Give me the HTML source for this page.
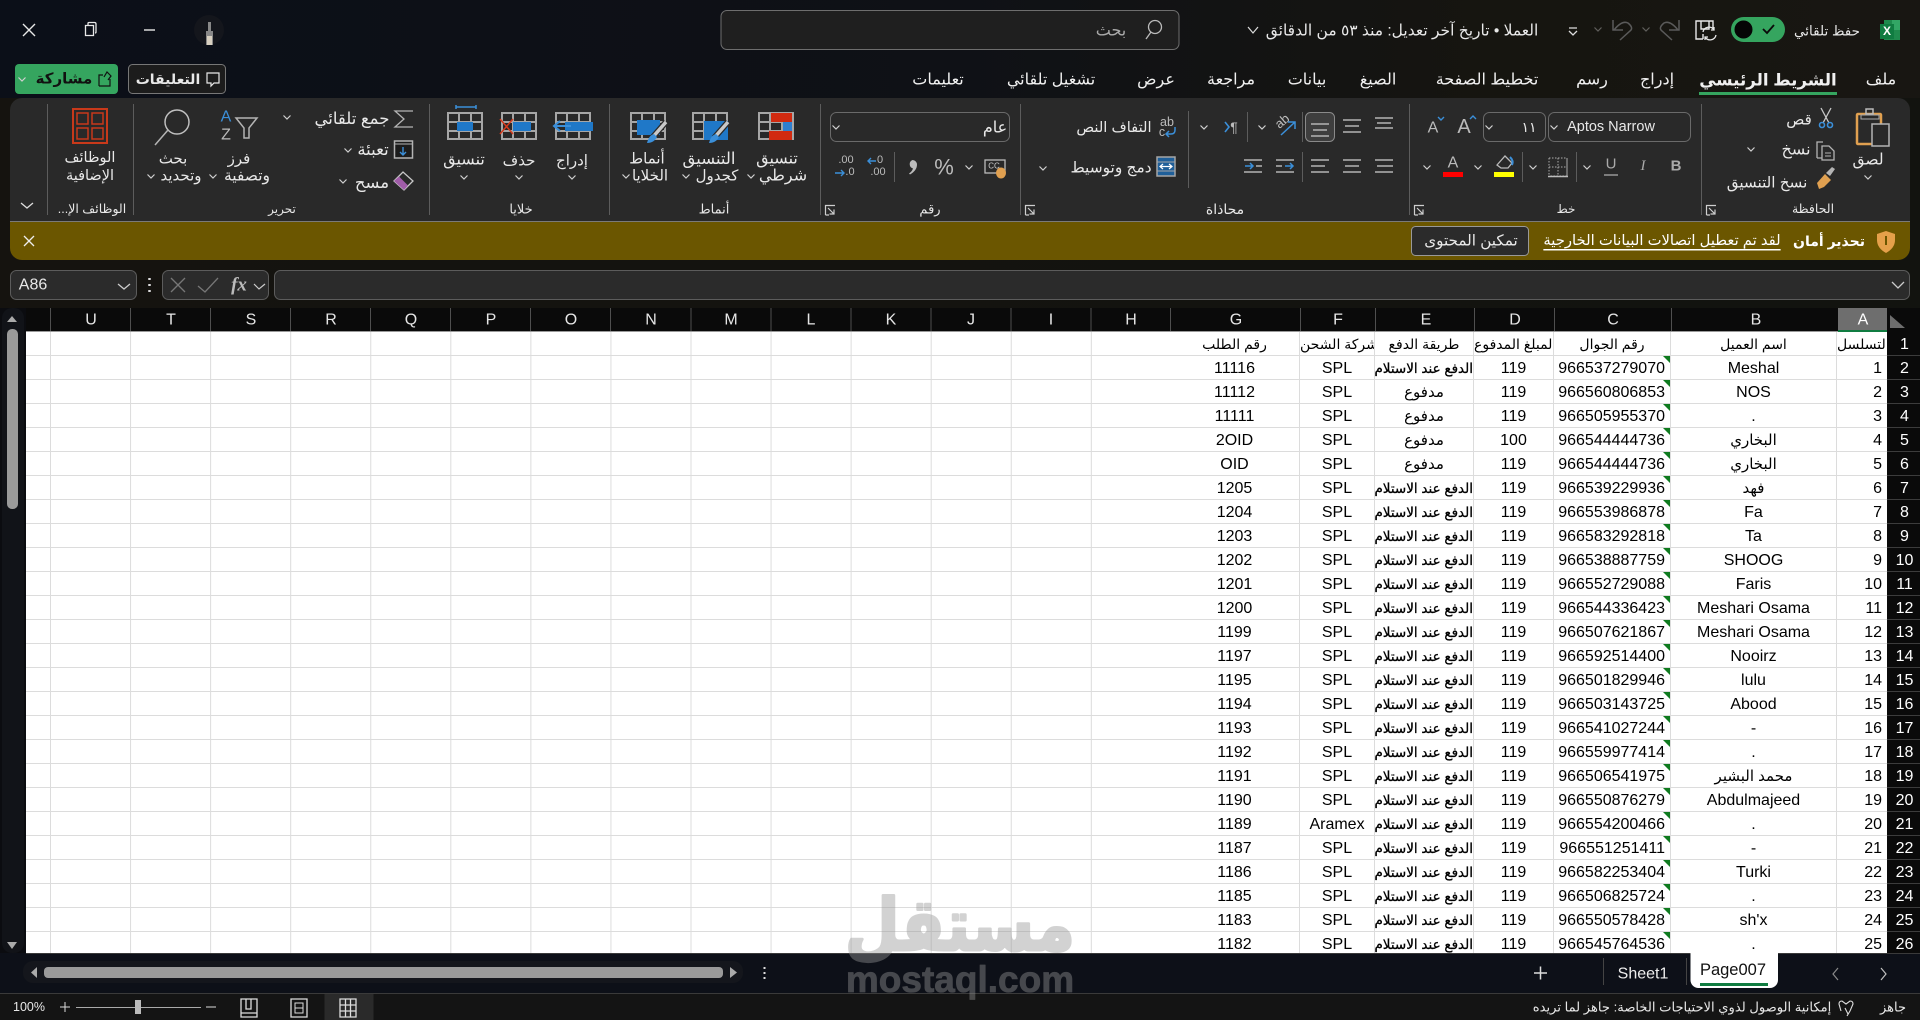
<!DOCTYPE html>
<html lang="ar"><head><meta charset="utf-8"><title>Excel</title>
<style>
html,body{margin:0;padding:0;width:1920px;height:1020px;overflow:hidden;background:#0d1017}
#sheet{position:absolute;left:26px;top:331px;width:1144px;height:622px;background-color:#fff;
background-image:linear-gradient(to right,#dcdcdc 1px,transparent 1px),linear-gradient(to bottom,#dcdcdc 1px,transparent 1px);
background-size:80.07px 100%,100% 24px;background-position:24px 0,0 24px}
#wrap{position:absolute;left:1170px;top:331px;width:750px;height:622px;overflow:hidden;background:#fff}
table{border-collapse:separate;border-spacing:0;table-layout:fixed;width:750px;font:16px "Liberation Sans","DejaVu Sans",sans-serif;color:#000}
td{padding:2px 0 0;height:24px;box-sizing:border-box;border-bottom:1px solid #dcdcdc;border-right:1px solid #dcdcdc;text-align:center;white-space:nowrap;overflow:hidden;position:relative;line-height:21px}
tr:first-child td{height:25px}
td.ar{font-size:15px}
td.e{direction:rtl;text-align:right;font-size:13.5px;-webkit-text-stroke:.3px #000;border-left:0}
td.c{text-align:right;padding-right:5px}
td.c:after{content:"";position:absolute;right:0;top:0;border-top:7px solid #0f7b1f;border-left:7px solid transparent}
td.a{text-align:right;padding-right:5px;border-right:0}
td.n{background:#0a0a0a;color:#fff;border:0;border-bottom:1px solid #3c3c3c;font-size:16px;padding-left:2px}
tr:first-child td.h{font-size:14px}
svg#ui{position:absolute;left:0;top:0}
#ui text{font-family:"Liberation Sans","DejaVu Sans",sans-serif;fill:#e8e8e8;font-size:13px;text-anchor:middle;dominant-baseline:central;direction:rtl}
#ui text.tab{font-size:16px;fill:#f0f0f0}
#ui text.b{font-weight:bold}
#ui text.h{font-size:16px;fill:#e6e6e6;direction:ltr}
#ui text.s{font-size:12px}
#ui .ln{fill:none;stroke:#b4b4b4;stroke-width:1.5}
#ui .bl{fill:none;stroke:#3b8fd9;stroke-width:2}
#wm{position:absolute;left:0;top:0;pointer-events:none}
#wm text{fill:#969696;stroke:#969696;stroke-linejoin:round;text-anchor:middle;font-weight:bold;font-family:"DejaVu Sans","Liberation Sans",sans-serif;opacity:.42}
</style></head><body>
<div id="sheet"></div>
<div id="wrap"><table>
<colgroup><col style="width:130px"><col style="width:75px"><col style="width:99px"><col style="width:80px"><col style="width:117px"><col style="width:166px"><col style="width:50px"><col style="width:33px"></colgroup>
<tr><td class="ar h">رقم الطلب</td><td class="ar h">شركة الشحن</td><td class="ar h">طريقة الدفع</td><td class="ar h">المبلغ المدفوع</td><td class="ar h">رقم الجوال</td><td class="ar h">اسم العميل</td><td class="ar h a">التسلسل</td><td class="n">1</td></tr>
<tr><td>11116</td><td>SPL</td><td class="e">الدفع عند الاستلام</td><td>119</td><td class="c">966537279070</td><td>Meshal</td><td class="a">1</td><td class="n">2</td></tr>
<tr><td>11112</td><td>SPL</td><td class="ar">مدفوع</td><td>119</td><td class="c">966560806853</td><td>NOS</td><td class="a">2</td><td class="n">3</td></tr>
<tr><td>11111</td><td>SPL</td><td class="ar">مدفوع</td><td>119</td><td class="c">966505955370</td><td>.</td><td class="a">3</td><td class="n">4</td></tr>
<tr><td>2OID</td><td>SPL</td><td class="ar">مدفوع</td><td>100</td><td class="c">966544444736</td><td class="ar">البخاري</td><td class="a">4</td><td class="n">5</td></tr>
<tr><td>OID</td><td>SPL</td><td class="ar">مدفوع</td><td>119</td><td class="c">966544444736</td><td class="ar">البخاري</td><td class="a">5</td><td class="n">6</td></tr>
<tr><td>1205</td><td>SPL</td><td class="e">الدفع عند الاستلام</td><td>119</td><td class="c">966539229936</td><td class="ar">فهد</td><td class="a">6</td><td class="n">7</td></tr>
<tr><td>1204</td><td>SPL</td><td class="e">الدفع عند الاستلام</td><td>119</td><td class="c">966553986878</td><td>Fa</td><td class="a">7</td><td class="n">8</td></tr>
<tr><td>1203</td><td>SPL</td><td class="e">الدفع عند الاستلام</td><td>119</td><td class="c">966583292818</td><td>Ta</td><td class="a">8</td><td class="n">9</td></tr>
<tr><td>1202</td><td>SPL</td><td class="e">الدفع عند الاستلام</td><td>119</td><td class="c">966538887759</td><td>SHOOG</td><td class="a">9</td><td class="n">10</td></tr>
<tr><td>1201</td><td>SPL</td><td class="e">الدفع عند الاستلام</td><td>119</td><td class="c">966552729088</td><td>Faris</td><td class="a">10</td><td class="n">11</td></tr>
<tr><td>1200</td><td>SPL</td><td class="e">الدفع عند الاستلام</td><td>119</td><td class="c">966544336423</td><td>Meshari Osama</td><td class="a">11</td><td class="n">12</td></tr>
<tr><td>1199</td><td>SPL</td><td class="e">الدفع عند الاستلام</td><td>119</td><td class="c">966507621867</td><td>Meshari Osama</td><td class="a">12</td><td class="n">13</td></tr>
<tr><td>1197</td><td>SPL</td><td class="e">الدفع عند الاستلام</td><td>119</td><td class="c">966592514400</td><td>Nooirz</td><td class="a">13</td><td class="n">14</td></tr>
<tr><td>1195</td><td>SPL</td><td class="e">الدفع عند الاستلام</td><td>119</td><td class="c">966501829946</td><td>lulu</td><td class="a">14</td><td class="n">15</td></tr>
<tr><td>1194</td><td>SPL</td><td class="e">الدفع عند الاستلام</td><td>119</td><td class="c">966503143725</td><td>Abood</td><td class="a">15</td><td class="n">16</td></tr>
<tr><td>1193</td><td>SPL</td><td class="e">الدفع عند الاستلام</td><td>119</td><td class="c">966541027244</td><td>-</td><td class="a">16</td><td class="n">17</td></tr>
<tr><td>1192</td><td>SPL</td><td class="e">الدفع عند الاستلام</td><td>119</td><td class="c">966559977414</td><td>.</td><td class="a">17</td><td class="n">18</td></tr>
<tr><td>1191</td><td>SPL</td><td class="e">الدفع عند الاستلام</td><td>119</td><td class="c">966506541975</td><td class="ar">محمد البشير</td><td class="a">18</td><td class="n">19</td></tr>
<tr><td>1190</td><td>SPL</td><td class="e">الدفع عند الاستلام</td><td>119</td><td class="c">966550876279</td><td>Abdulmajeed</td><td class="a">19</td><td class="n">20</td></tr>
<tr><td>1189</td><td>Aramex</td><td class="e">الدفع عند الاستلام</td><td>119</td><td class="c">966554200466</td><td>.</td><td class="a">20</td><td class="n">21</td></tr>
<tr><td>1187</td><td>SPL</td><td class="e">الدفع عند الاستلام</td><td>119</td><td class="c">966551251411</td><td>-</td><td class="a">21</td><td class="n">22</td></tr>
<tr><td>1186</td><td>SPL</td><td class="e">الدفع عند الاستلام</td><td>119</td><td class="c">966582253404</td><td>Turki</td><td class="a">22</td><td class="n">23</td></tr>
<tr><td>1185</td><td>SPL</td><td class="e">الدفع عند الاستلام</td><td>119</td><td class="c">966506825724</td><td>.</td><td class="a">23</td><td class="n">24</td></tr>
<tr><td>1183</td><td>SPL</td><td class="e">الدفع عند الاستلام</td><td>119</td><td class="c">966550578428</td><td>sh'x</td><td class="a">24</td><td class="n">25</td></tr>
<tr><td>1182</td><td>SPL</td><td class="e">الدفع عند الاستلام</td><td>119</td><td class="c">966545764536</td><td>.</td><td class="a">25</td><td class="n">26</td></tr>
</table></div>

<svg id="ui" width="1920" height="1020" viewBox="0 0 1920 1020" xmlns="http://www.w3.org/2000/svg">
<defs>
<linearGradient id="bg" x1="0" x2="1" y1="0" y2="0"><stop offset="0" stop-color="#0b0f18"/><stop offset=".5" stop-color="#0f1116"/><stop offset=".78" stop-color="#161510"/><stop offset="1" stop-color="#181612"/></linearGradient>
<linearGradient id="fb" x1="0" x2="1" y1="0" y2="0"><stop offset="0" stop-color="#15130f"/><stop offset="1" stop-color="#12130f"/></linearGradient>
<path id="v" d="M-3.5-1.5 0 2l3.5-3.5" fill="none" stroke="#d0d0d0" stroke-width="1.2"/>
<g id="gr" fill="none" stroke="#a6a6a6" stroke-width="2"><rect x="1" y="1" width="34" height="26"/><path d="M1 10h34M1 19h34M12 1v26M24 1v26"/></g>
<path id="lnch" d="M.5 10V.5H10M3 3l6 6M9 4.5V9H4.5M.5 10H4" fill="none" stroke="#cfcfcf" stroke-width="1.2"/>
<path id="sep" d="M.5 0v111" stroke="#5c5c5c"/>
</defs>

<!-- backgrounds -->
<rect width="1920" height="98" fill="url(#bg)"/>
<rect y="98" width="1920" height="170" fill="url(#fb)"/>
<rect y="260" width="1920" height="48" fill="url(#fb)"/>
<rect x="0" y="308" width="26" height="645" fill="#0b0c10"/>
<rect y="953" width="1920" height="40" fill="#0d1018"/>
<rect y="993" width="1920" height="27" fill="#141414"/>
<path d="M0 993.5h1920" stroke="#3a3a3a"/>

<!-- title bar -->
<path d="M23 24l12 12M35 24 23 36" stroke="#e8e8e8" stroke-width="1.4" fill="none"/>
<path d="M85.5 25.5h8v10h-8zM88 25v-1.5q0-1 1-1h5.5q1.5 0 1.5 1.5v8q0 1-1 1" fill="none" stroke="#e8e8e8" stroke-width="1.3"/>
<path d="M144 30h11" stroke="#e8e8e8" stroke-width="1.4"/>
<circle cx="209" cy="30" r="15" fill="#14161c"/>
<path d="M208 22h3v9h2v14h-7V31h2z" fill="#888"/><path d="M207 36h5v9h-5z" fill="#d8d0c0"/>
<rect x="721" y="10.5" width="458" height="39" rx="6" fill="#1f1f1f" stroke="#6e6e6e"/>
<text x="1111" y="31" style="fill:#aaa;font-size:16px">بحث</text>
<circle cx="1155" cy="27" r="6.5" fill="none" stroke="#bbb" stroke-width="1.3"/><path d="M1151 32l-5 7" stroke="#bbb" stroke-width="1.3"/>
<text x="1402" y="31" style="font-size:15.5px">العملا • تاريخ آخر تعديل: منذ ٥٣ من الدقائق</text>
<path d="M1248 27l5 6 5-6" fill="none" stroke="#ddd" stroke-width="1.2"/>
<path d="M1569 28h8M1569 31l4 4 4-4" fill="none" stroke="#ddd" stroke-width="1.3"/>
<use href="#v" x="1598" y="29" opacity=".4"/>
<path d="M1613 20v10h10M1614 30q8-10 14-7q6 5 2 8l-10 9" fill="none" stroke="#5a5a5a" stroke-width="1.5"/>
<use href="#v" x="1646" y="29" opacity=".4"/>
<path d="M1679 20v10h-10M1678 30q-8-10-14-7q-6 5-2 8l10 9" fill="none" stroke="#5a5a5a" stroke-width="1.5"/>
<path d="M1703 39h-7V21h17v8M1701 21v8h8v-8M1703 39v-5" fill="none" stroke="#e8e8e8" stroke-width="1.4"/>
<path d="M1702 32a6 6 0 0 1 11-2M1715 35a6 6 0 0 1-11 2M1713 27v3h-3M1704 40v-3h3" transform="translate(1,0)" fill="none" stroke="#e8e8e8" stroke-width="1.3"/>
<rect x="1731" y="17" width="54" height="25" rx="12.5" fill="#35a55f"/><circle cx="1743.500" cy="29.500" r="9" fill="#050505"/>
<path d="M1763 29l4 4 7-8" fill="none" stroke="#0a0a0a" stroke-width="1.8"/>
<text x="1827" y="31" style="font-size:13.5px">حفظ تلقائي</text>
<rect x="1884" y="20" width="16" height="20" fill="#1f8a4d"/><rect x="1892" y="20" width="8" height="10" fill="#33a665"/><rect x="1880" y="24" width="14" height="15" fill="#107c41"/>
<text x="1887" y="31" class="b" style="font-size:12px;fill:#fff;direction:ltr">X</text>

<!-- tab row -->
<rect x="15" y="64" width="103" height="30" rx="4" fill="#35a55f"/>
<text x="64" y="79" class="b" style="fill:#111;font-size:15px">مشاركة</text>
<path d="M99 86V75h4M99 86h11v-7M104 77l3-5 4 4-3 4" fill="none" stroke="#111" stroke-width="1.2"/>
<use href="#v" x="22" y="79" style="stroke:#111"/>
<rect x="128.500" y="64.500" width="97" height="29" rx="4" fill="#1c1c1c" stroke="#777"/>
<text x="168" y="79" class="b" style="font-size:14px">التعليقات</text>
<path d="M207 73h12v10h-5l-3 3v-3h-4z" fill="none" stroke="#e8e8e8" stroke-width="1.2"/>
<text class="tab" x="1881" y="80">ملف</text>
<text class="tab b" x="1768" y="80" style="font-size:16.7px">الشريط الرئيسي</text>
<rect x="1699" y="92" width="138" height="3" fill="#35a55f"/>
<text class="tab" x="1657" y="80">إدراج</text>
<text class="tab" x="1592" y="80">رسم</text>
<text class="tab" x="1487" y="80">تخطيط الصفحة</text>
<text class="tab" x="1378" y="80">الصيغ</text>
<text class="tab" x="1307" y="80">بيانات</text>
<text class="tab" x="1231" y="80">مراجعة</text>
<text class="tab" x="1156" y="80">عرض</text>
<text class="tab" x="1051" y="80">تشغيل تلقائي</text>
<text class="tab" x="938" y="80">تعليمات</text>

<!-- ribbon -->
<path d="M22 98H1898a12 12 0 0 1 12 12V221H10V110A12 12 0 0 1 22 98Z" fill="#292929"/>
<path d="M10 221H1910V248a12 12 0 0 1-12 12H22a12 12 0 0 1-12-12Z" fill="#6b5600"/>
<path d="M10 221.500H1910" stroke="#7a7a7a"/>
<use href="#sep" x="47" y="104"/><use href="#sep" x="133" y="104"/><use href="#sep" x="429" y="104"/><use href="#sep" x="609" y="104"/><use href="#sep" x="820" y="104"/><use href="#sep" x="1020" y="104"/><use href="#sep" x="1409" y="104"/><use href="#sep" x="1701" y="104"/>
<!-- group labels -->
<text class="s" x="1813" y="209" style="font-size:12.5px">الحافظة</text><text class="s" x="1566" y="209">خط</text><text class="s" x="1225" y="209" style="font-size:14px">محاذاة</text><text class="s" x="930" y="209" style="font-size:13px">رقم</text><text class="s" x="714" y="209" style="font-size:13px">أنماط</text><text class="s" x="521" y="209" style="font-size:13px">خلايا</text><text class="s" x="282" y="209">تحرير</text><text class="s" x="92" y="209" style="font-size:12.5px">الوظائف الإ...</text>
<use href="#lnch" x="1414" y="205"/><use href="#lnch" x="1706" y="205"/><use href="#lnch" x="1025" y="205"/><use href="#lnch" x="825" y="205"/>
<path d="M21 203l6 5 6-5" fill="none" stroke="#ddd" stroke-width="1.3"/>

<!-- clipboard -->
<rect x="1857" y="114" width="24" height="30" rx="1" fill="none" stroke="#e0a050" stroke-width="2.5"/>
<rect x="1866" y="109" width="7" height="5" fill="none" stroke="#bbb" stroke-width="1.5"/><path d="M1861 115h18v4h-18z" fill="none" stroke="#aaa" stroke-width="1"/>
<rect x="1872" y="124" width="17" height="22" fill="#292929" stroke="#b4b4b4" stroke-width="1.5"/>
<text x="1868" y="160" style="font-size:15.5px">لصق</text><use href="#v" x="1868" y="177"/>
<path d="M1821 108l8 15M1831 108l-8 15" stroke="#c8c8c8" stroke-width="1.3"/><circle cx="1822" cy="125" r="2.5" class="bl" style="stroke-width:1.6"/><circle cx="1830" cy="125" r="2.5" class="bl" style="stroke-width:1.6"/>
<text x="1799" y="120" style="font-size:15px">قص</text>
<path d="M1817 158v-16h6M1823 158h-6" fill="none" stroke="#b4b4b4" stroke-width="1.3"/><path d="M1822 146h7l5 5v9h-12z" fill="#292929" stroke="#b4b4b4" stroke-width="1.3"/><path d="M1825 153h6M1825 156h6" stroke="#b4b4b4"/>
<text x="1796" y="150" style="font-size:16px">نسخ</text><use href="#v" x="1751" y="149"/>
<path d="M1817 183l8-9 6 6-7 7-5 2z" fill="#e0a050"/><path d="M1826 173l6-6 3 2-5 7z" fill="#b4b4b4"/>
<text x="1767" y="183" style="font-size:15.2px">نسخ التنسيق</text>

<!-- font -->
<rect x="1548.500" y="112.500" width="142" height="29" rx="6" fill="none" stroke="#6a6a6a"/>
<text x="1611" y="127" style="font-size:14.500px;direction:ltr">Aptos Narrow</text><use href="#v" x="1554" y="127"/>
<rect x="1483.500" y="112.500" width="62" height="29" rx="6" fill="none" stroke="#6a6a6a"/>
<text x="1529" y="127" style="font-size:14px">١١</text><use href="#v" x="1489" y="127"/>
<text x="1464" y="127" style="font-size:20px;direction:ltr;fill:#bbb">A</text><path d="M1470 119l3-3 3 3" fill="none" stroke="#3b8fd9" stroke-width="1.4"/>
<text x="1433" y="128" style="font-size:16px;direction:ltr;fill:#bbb">A</text><path d="M1438 117l3 3 3-3" fill="none" stroke="#3b8fd9" stroke-width="1.4"/>
<text x="1676" y="166" class="b" style="font-size:15px;direction:ltr;fill:#aaa">B</text>
<text x="1643" y="166" style="font-size:15px;direction:ltr;font-style:italic;fill:#aaa;font-family:'Liberation Serif',serif">I</text>
<text x="1611" y="164" style="font-size:15px;direction:ltr;fill:#aaa">U</text><path d="M1604 175h14" stroke="#aaa" stroke-width="1.3"/>
<use href="#v" x="1587" y="167"/><path d="M1576.500 152v30M1522.500 152v30" stroke="#5c5c5c"/>
<path d="M1549 158h18v18h-18M1567 176v-18M1549 158v18M1558 158v18M1549 167h18" fill="none" stroke="#aaa" stroke-dasharray="1.5 1.500"/><path d="M1548 176.500h20" stroke="#bbb" stroke-width="1.5"/>
<use href="#v" x="1533" y="167"/>
<path d="M1497 165l8-9 7 7-4 5h-7z" fill="none" stroke="#bbb" stroke-width="1.3"/><path d="M1510 157q4 4 2 8" stroke="#3b8fd9" stroke-width="2" fill="none"/>
<rect x="1494" y="172" width="20" height="5" fill="#ffff00"/>
<use href="#v" x="1478" y="167"/>
<text x="1453" y="163" style="font-size:16px;direction:ltr;fill:#bbb">A</text><rect x="1443" y="172" width="20" height="5" fill="#ff0000"/>
<use href="#v" x="1427" y="167"/>

<!-- alignment -->
<rect x="1305.500" y="112.500" width="29" height="29" rx="5" fill="#3e3e3e" stroke="#8a8a8a"/>
<path d="M1375 118h18M1377 123h14M1375 128h18" class="ln"/><path d="M1343 120h18M1345 126h14M1343 132h18" class="ln"/><path d="M1311 124h18M1313 130h14M1311 136h18" class="ln"/>
<path d="M1302.500 112v30M1302.500 152v30M1247.500 112v30M1188.500 111v77" stroke="#5c5c5c"/>
<text x="1282" y="121" style="font-size:13px;direction:ltr;fill:#bbb;transform-box:fill-box;transform-origin:center;transform:rotate(-40deg)">ab</text>
<path d="M1281 135l14-13M1288 122h7v7" class="bl" style="stroke-width:1.5"/><use href="#v" x="1262" y="127"/>
<text x="1234" y="127" style="font-size:14px;direction:ltr;fill:#bbb">¶</text><path d="M1225 122l4 5-4 5" class="bl" style="stroke-width:1.6"/><use href="#v" x="1204" y="127"/>
<text x="1167" y="122" style="font-size:12.500px;direction:ltr;fill:#bbb">ab</text><text x="1162" y="132" style="font-size:12.500px;direction:ltr;fill:#bbb">c</text><path d="M1175 127v3q0 4-4 4h-5M1169 131l-3 3 3 3" class="bl" style="stroke-width:1.5"/>
<text x="1114" y="128" style="font-size:14.700px">التفاف النص</text>
<path d="M1375 160h18M1377 166h16M1375 172h18" class="ln"/><path d="M1343 160h18M1345 166h14M1343 172h18" class="ln"/><path d="M1311 160h18M1311 166h14M1311 172h18" class="ln"/>
<path d="M1276 160h18M1276 166h6M1276 172h18" class="ln"/><path d="M1285 166h8M1290 163l3 3-3 3" class="bl" style="stroke-width:1.5"/>
<path d="M1244 160h18M1256 166h6M1244 172h18" class="ln"/><path d="M1245 166h8M1250 163l3 3-3 3" class="bl" style="stroke-width:1.5"/>
<rect x="1157" y="157" width="18" height="19" fill="#1f5f99" stroke="#a6a6a6" stroke-width="1.500"/><path d="M1157 162h18M1157 171h18" stroke="#a6a6a6"/><path d="M1160 166.500h12M1163 164l-3 2.500 3 2.500M1169 164l3 2.500-3 2.500" fill="none" stroke="#fff" stroke-width="1.2"/>
<text x="1111" y="168" style="font-size:15.400px">دمج وتوسيط</text><use href="#v" x="1043" y="168"/>

<!-- number -->
<rect x="830.500" y="112.500" width="179" height="29" rx="6" fill="none" stroke="#6a6a6a"/>
<text x="995" y="128" style="font-size:16px">عام</text><use href="#v" x="836" y="127"/>
<rect x="985" y="160" width="20" height="13" fill="none" stroke="#bbb" stroke-width="1.300"/><text x="994" y="166" style="font-size:8px;direction:ltr;fill:#ccc">CC</text>
<ellipse cx="1001" cy="173" rx="5" ry="5.500" fill="#e0a050"/>
<use href="#v" x="969" y="167"/>
<text x="944" y="167" style="font-size:22px;direction:ltr;fill:#bbb">%</text>
<path d="M912.500 160a4.500 4.500 0 0 1 4.500 4.500q0 6-7 10l-1-1q3-2 4-5a4.500 4.500 0 0 1-.5-8.500z" fill="#bbb"/>
<path d="M894.500 152v30" stroke="#5c5c5c"/>
<text x="880" y="160" style="font-size:11px;direction:ltr;fill:#bbb">0</text><text x="878" y="172" style="font-size:11px;direction:ltr;fill:#bbb">.00</text><path d="M868 161h8M871 158l-3 3 3 3" class="bl" style="stroke-width:1.400"/>
<text x="846" y="160" style="font-size:11px;direction:ltr;fill:#bbb">.00</text><text x="850" y="172" style="font-size:11px;direction:ltr;fill:#bbb">.0</text><path d="M835 173h9M841 170l3 3-3 3" class="bl" style="stroke-width:1.400"/>

<!-- styles -->
<use href="#gr" x="758" y="112"/>
<rect x="771" y="113" width="21" height="9" fill="#d12a10"/><rect x="783" y="122" width="9" height="9" fill="#2f7fd0"/><rect x="769" y="131" width="23" height="9" fill="#d12a10"/>
<text x="777" y="159" style="font-size:16px">تنسيق</text><text x="783" y="176" style="font-size:16px">شرطي</text><use href="#v" x="751" y="176"/>
<use href="#gr" x="692" y="112"/><rect x="704" y="121" width="24" height="19" fill="#1f78c8"/>
<path d="M728 122l-14 16" stroke="#292929" stroke-width="6"/><path d="M728 122l-14 16" stroke="#c8c8c8" stroke-width="3.500"/><path d="M716 134q-5 1-7 9 7 0 10-6z" fill="#3b8fd9"/>
<text x="709" y="159" style="font-size:16.500px">التنسيق</text><text x="717" y="176" style="font-size:15px">كجدول</text><use href="#v" x="686" y="176"/>
<use href="#gr" x="630" y="112"/><rect x="637" y="120" width="23" height="15" fill="#1f78c8"/><path d="M666 122l-14 16" stroke="#292929" stroke-width="6"/><path d="M666 122l-14 16" stroke="#c8c8c8" stroke-width="3.500"/><path d="M654 134q-5 1-7 9 7 0 10-6z" fill="#3b8fd9"/>
<text x="647" y="159" style="font-size:15px">أنماط</text><text x="650" y="176" style="font-size:15px">الخلايا</text><use href="#v" x="626" y="176"/>

<!-- cells -->
<use href="#gr" x="555" y="112"/><rect x="565" y="122" width="28" height="9" fill="#1f78c8"/><path d="M571 126h-16M560 121l-6 5 6 5" fill="none" stroke="#3b8fd9" stroke-width="2"/>
<text x="572" y="161" style="font-size:15px">إدراج</text><use href="#v" x="572" y="177"/>
<use href="#gr" x="501" y="112"/><rect x="513" y="122" width="18" height="9" fill="#1f78c8"/><path d="M500 119l13 15M513 119l-13 15" stroke="#d63a1c" stroke-width="1.500"/>
<text x="519" y="161" style="font-size:15px">حذف</text><use href="#v" x="519" y="177"/>
<use href="#gr" x="447" y="112"/><rect x="457" y="122" width="16" height="9" fill="#1f78c8"/><path d="M456 107h20M456 105v4M476 105v4" stroke="#3b8fd9" stroke-width="1.500"/>
<text x="464" y="160" style="font-size:16px">تنسيق</text><use href="#v" x="464" y="177"/>

<!-- editing -->
<path d="M413 111h-18l9 8-9 8h18" fill="none" stroke="#b4b4b4" stroke-width="1.300"/>
<text x="352" y="119" style="font-size:16.500px">جمع تلقائي</text><use href="#v" x="287" y="117"/>
<rect x="394.500" y="141" width="18" height="17" fill="#1c1c1c" stroke="#b4b4b4" stroke-width="1.500"/><path d="M394 144h18" stroke="#b4b4b4"/><path d="M403 147v8M400 152l3 3 3-3" class="bl" style="stroke-width:1.400"/>
<text x="373" y="150" style="font-size:16.500px">تعبئة</text><use href="#v" x="348" y="150"/>
<path d="M394 181l9-9 10 9-9 9z" fill="none" stroke="#c8c8c8" stroke-width="1.300"/><path d="M394 181l5-4.500 9 9-4 4.500z" fill="#a05ca8"/>
<text x="372" y="183" style="font-size:16.500px">مسح</text><use href="#v" x="343" y="181"/>
<text x="226" y="117" style="font-size:16px;direction:ltr;fill:#3b8fd9">A</text><text x="226" y="135" style="font-size:16px;direction:ltr;fill:#bbb">Z</text>
<path d="M236 118h21l-8 10v10h-5v-10z" fill="none" stroke="#b4b4b4" stroke-width="1.500"/>
<text x="239" y="159" style="font-size:15px">فرز</text><text x="247" y="176" style="font-size:15.500px">وتصفية</text><use href="#v" x="213" y="176"/>
<circle cx="177" cy="122" r="12" fill="none" stroke="#c0c0c0" stroke-width="1.500"/><path d="M168 130l-13 15" stroke="#b4b4b4" stroke-width="1.500"/>
<text x="173" y="159" style="font-size:15px">بحث</text><text x="181" y="176" style="font-size:15px">وتحديد</text><use href="#v" x="151" y="176"/>
<rect x="73" y="109" width="34" height="34" fill="none" stroke="#c8391a" stroke-width="2"/><g fill="none" stroke="#c8391a" stroke-width="1.500"><rect x="77" y="113" width="11" height="11"/><rect x="92" y="113" width="11" height="11"/><rect x="77" y="128" width="11" height="11"/><rect x="92" y="128" width="11" height="11"/></g>
<text x="90" y="158" style="font-size:14.500px">الوظائف</text><text x="90" y="176" style="font-size:14.500px">الإضافية</text>

<!-- warning -->
<path d="M24 236l10 10M34 236 24 246" stroke="#eee" stroke-width="1.300" fill="none"/>
<path d="M1886 231l9 3v6q0 8-9 13-9-5-9-13v-6z" fill="#e5a04a"/><path d="M1886 236v9" stroke="#6b5600" stroke-width="2"/>
<text x="1829" y="241" class="b" style="font-size:14px;fill:#fff">تحذير أمان</text>
<text x="1662" y="241" style="font-size:14.800px;fill:#fff;text-decoration:underline">لقد تم تعطيل اتصالات البيانات الخارجية</text>
<rect x="1411.500" y="226.500" width="117" height="29" rx="4" fill="#2b2b2b" stroke="#999"/>
<text x="1471" y="241" style="font-size:15.200px">تمكين المحتوى</text>

<!-- formula bar -->
<rect x="10.500" y="270.500" width="126" height="29" rx="6" fill="#2b2b2b" stroke="#5c5c5c"/>
<text x="33" y="285" style="font-size:16px;direction:ltr">A86</text><path d="M118 284l6 5 6-5" fill="none" stroke="#ccc" stroke-width="1.300"/>
<path d="M149.500 279v2M149.500 285v2M149.500 291v2" stroke="#ddd" stroke-width="2.500" transform="translate(0,-1)"/>
<rect x="162.500" y="270.500" width="106" height="29" rx="6" fill="#2b2b2b" stroke="#5c5c5c"/>
<path d="M171 278l14 14M185 278l-14 14" stroke="#777" stroke-width="1.300"/><path d="M198 286l7 6 13-14" fill="none" stroke="#777" stroke-width="1.300"/>
<text x="239" y="285" style="font-size:19px;direction:ltr;font-family:'Liberation Serif',serif;font-style:italic;font-weight:bold;fill:#bbb">fx</text>
<path d="M254 284l5 5 6-5" fill="none" stroke="#ccc" stroke-width="1.200"/>
<rect x="274.500" y="270.500" width="1635" height="29" rx="6" fill="#2b2b2b" stroke="#5c5c5c"/>
<path d="M1892 282l6 6 6-6" fill="none" stroke="#ccc" stroke-width="1.300"/>

<!-- col headers -->
<rect x="26" y="308" width="1861" height="23" fill="#0a0a0a"/><rect x="1887" y="308" width="33" height="23" fill="#0a0a0a"/>
<rect x="1838" y="308" width="49" height="23" fill="#6e6e6e"/><rect x="1838" y="330" width="49" height="2" fill="#107c41"/>
<path d="M1890 315v13h15z" fill="#6e6e6e"/>
<path d="M26 331.500H1838" stroke="#9a9a9a"/>
<path d="M50.500 308v23M130.500 308v23M210.500 308v23M290.500 308v23M370.500 308v23M450.500 308v23M530.500 308v23M610.500 308v23M691 308v23M771 308v23M851 308v23M931 308v23M1011 308v23M1091 308v23M1170.500 308v23M1300.500 308v23M1375.500 308v23M1474.500 308v23M1554.500 308v23M1671.500 308v23" stroke="#4f4f4f"/>
<g>
<text class="h" x="91" y="320">U</text><text class="h" x="171" y="320">T</text><text class="h" x="251" y="320">S</text><text class="h" x="331" y="320">R</text><text class="h" x="411" y="320">Q</text><text class="h" x="491" y="320">P</text><text class="h" x="571" y="320">O</text><text class="h" x="651" y="320">N</text><text class="h" x="731" y="320">M</text><text class="h" x="811" y="320">L</text><text class="h" x="891" y="320">K</text><text class="h" x="971" y="320">J</text><text class="h" x="1051" y="320">I</text><text class="h" x="1131" y="320">H</text>
<text class="h" x="1236" y="320">G</text><text class="h" x="1338" y="320">F</text><text class="h" x="1426" y="320">E</text><text class="h" x="1515" y="320">D</text><text class="h" x="1613" y="320">C</text><text class="h" x="1756" y="320">B</text><text class="h" x="1863" y="320" style="fill:#fff">A</text>
</g>

<!-- v scroll -->
<rect x="2" y="308" width="22" height="645" rx="10" fill="#111318"/>
<path d="M7 322l5-6 5 6z" fill="#aaa"/><rect x="7" y="329" width="11" height="180" rx="5" fill="#9a9a9a"/><path d="M7 942l5 7 5-7z" fill="#aaa"/>
<path d="M26 953.500H1920" stroke="#3a3a3a"/>

<!-- h scroll & tabs -->
<rect x="23" y="961" width="720" height="22" rx="10" fill="#14161c"/>
<path d="M37 967l-6 5.500 6 5.500z" fill="#aaa"/><rect x="44" y="967" width="679" height="11" rx="4" fill="#9a9a9a"/><path d="M730 967l7 5.500-7 5.500z" fill="#aaa"/>
<path d="M764.500 967v2M764.500 972v2M764.500 977v2" stroke="#ddd" stroke-width="2"/>
<path d="M1534 973h13M1540.500 966.500v13" stroke="#ddd" stroke-width="1.500"/>
<path d="M1603.500 958v27M1686.500 958v27" stroke="#444"/>
<text x="1643" y="974" style="font-size:16px;direction:ltr;fill:#eee">Sheet1</text>
<path d="M1690.500 953H1778V980a8 8 0 0 1-8 8H1698a8 8 0 0 1-7.500-8Z" fill="#fff"/>
<text x="1733" y="970" style="font-size:16.500px;direction:ltr;fill:#111">Page007</text><rect x="1700" y="983" width="68" height="3" fill="#107c41"/>
<path d="M1838 968l-5 6 5 6" fill="none" stroke="#8a8a8a" stroke-width="1.200"/><path d="M1881 968l5 6-5 6" fill="none" stroke="#c0c0c0" stroke-width="1.200"/>

<!-- status bar -->
<text x="29" y="1007" style="font-size:12.500px;direction:ltr">100%</text>
<path d="M60 1007h10M65 1002v10" stroke="#ddd"/><path d="M76 1007.500h125" stroke="#aaa"/><rect x="135" y="1000" width="6" height="14" fill="#bbb"/><path d="M206 1007h10" stroke="#ddd"/>
<rect x="324.500" y="994" width="49" height="26" fill="#2a2a2a"/>
<path d="M241 999h16v18h-16zM241 1013h16M246 999v10h5v-10" fill="none" stroke="#ddd" stroke-width="1.300"/>
<path d="M291 999h16v18h-16z" fill="none" stroke="#ddd" stroke-width="1.300"/><path d="M295 1003h8v10h-8zM295 1008h8" fill="none" stroke="#ddd"/>
<path d="M340 999h16v18h-16zM345.500 999v18M350.500 999v18M340 1005h16M340 1011h16" fill="none" stroke="#ddd" stroke-width="1.300"/>
<text x="1893" y="1007" style="font-size:13px">جاهز</text>
<path d="M1841 1011l-2-7q0-3 3-3l4 3 4-3q3 0 3 3l-3 7-3 5M1845 1008l3 6" fill="none" stroke="#ddd" stroke-width="1.100"/>
<text x="1682" y="1007" style="font-size:13.100px">إمكانية الوصول لذوي الاحتياجات الخاصة: جاهز لما تريده</text>
</svg>

<svg id="wm" width="1920" height="1020" viewBox="0 0 1920 1020" xmlns="http://www.w3.org/2000/svg">
<text x="960" y="950" style="font-size:72px;stroke-width:3px;direction:rtl" textLength="230" lengthAdjust="spacingAndGlyphs">مستقل</text>
<text x="960" y="992" style="font-size:37px;stroke-width:.8px;font-family:'Liberation Sans',sans-serif">mostaql.com</text>
</svg>
</body></html>
